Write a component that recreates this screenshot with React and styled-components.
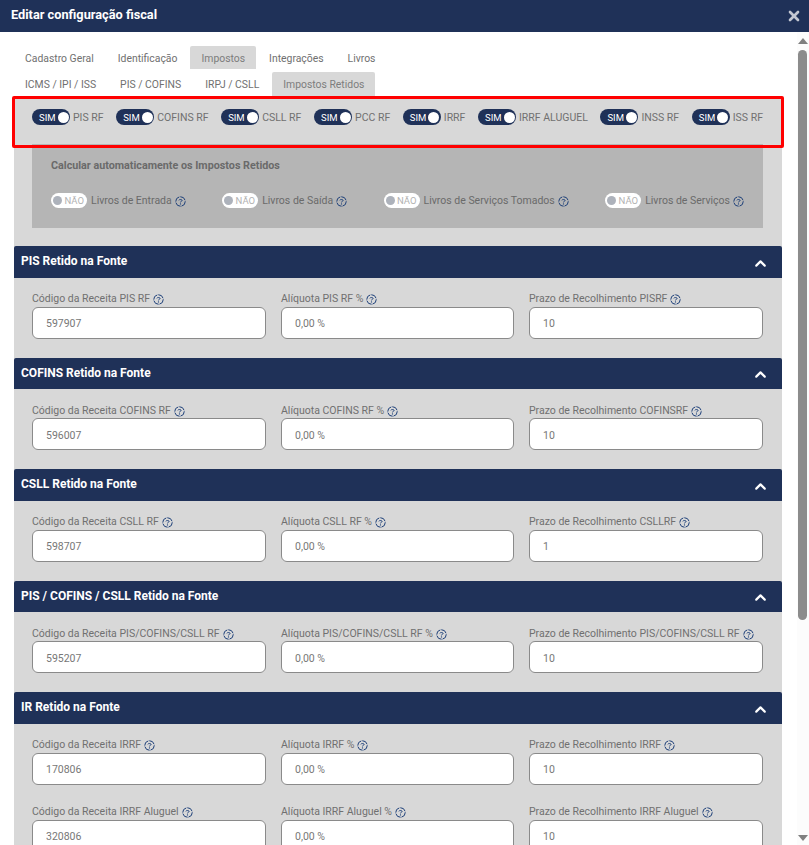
import React from 'react'
import styled, { createGlobalStyle } from 'styled-components'
import { ChevronUp, X } from 'lucide-react'

const GlobalStyle = createGlobalStyle`
  html, body {
    margin: 0;
    height: 100%;
    overflow: hidden;
    background: #fff;
    font-family: Roboto, "Liberation Sans", sans-serif;
    font-size: 10.5px;
    color: #707070;
  }
  * { box-sizing: border-box; }
`

const mainTabs = ['Cadastro Geral', 'Identificação', 'Impostos', 'Integrações', 'Livros']
const subTabs = ['ICMS / IPI / ISS', 'PIS / COFINS', 'IRPJ / CSLL', 'Impostos Retidos']
const retidos = ['PIS RF', 'COFINS RF', 'CSLL RF', 'PCC RF', 'IRRF', 'IRRF ALUGUEL', 'INSS RF', 'ISS RF']
const livros = ['Livros de Entrada', 'Livros de Saída', 'Livros de Serviços Tomados', 'Livros de Serviços']

const sections = [
  {
    title: 'PIS Retido na Fonte',
    fields: [
      ['Código da Receita PIS RF', '597907'],
      ['Alíquota PIS RF %', '0,00 %'],
      ['Prazo de Recolhimento PISRF', '10'],
    ],
  },
  {
    title: 'COFINS Retido na Fonte',
    fields: [
      ['Código da Receita COFINS RF', '596007'],
      ['Alíquota COFINS RF %', '0,00 %'],
      ['Prazo de Recolhimento COFINSRF', '10'],
    ],
  },
  {
    title: 'CSLL Retido na Fonte',
    fields: [
      ['Código da Receita CSLL RF', '598707'],
      ['Alíquota CSLL RF %', '0,00 %'],
      ['Prazo de Recolhimento CSLLRF', '1'],
    ],
  },
  {
    title: 'PIS / COFINS / CSLL Retido na Fonte',
    fields: [
      ['Código da Receita PIS/COFINS/CSLL RF', '595207'],
      ['Alíquota PIS/COFINS/CSLL RF %', '0,00 %'],
      ['Prazo de Recolhimento PIS/COFINS/CSLL RF', '10'],
    ],
  },
  {
    title: 'IR Retido na Fonte',
    fields: [
      ['Código da Receita IRRF', '170806'],
      ['Alíquota IRRF %', '0,00 %'],
      ['Prazo de Recolhimento IRRF', '10'],
      ['Código da Receita IRRF Aluguel', '320806'],
      ['Alíquota IRRF Aluguel %', '0,00 %'],
      ['Prazo de Recolhimento IRRF Aluguel', '10'],
    ],
  },
]

function Help() {
  return (
    <HelpIcon viewBox="0 0 10 10">
      <circle cx="5" cy="5" r="4.3" fill="none" stroke="#1c3f78" strokeWidth="0.9" strokeDasharray="5.6 0.9" />
      <path d="M3.5 3.9C3.6 3 6.4 3 6.5 3.9C6.5 4.8 5 4.7 5 5.8" fill="none" stroke="#1c3f78" strokeWidth="0.9" />
      <circle cx="5" cy="7.2" r="0.55" fill="#1c3f78" />
    </HelpIcon>
  )
}

export default function App() {
  return (
    <Modal>
      <GlobalStyle />
      <Header>
        <Title>Editar configuração fiscal</Title>
        <CloseIcon size={16} strokeWidth={4} />
      </Header>
      <Body>
        <Content>
          <Tabs>
            {mainTabs.map(t => <Tab key={t} active={t === 'Impostos'}>{t}</Tab>)}
          </Tabs>
          <Tabs>
            {subTabs.map(t => <Tab key={t} active={t === 'Impostos Retidos'}>{t}</Tab>)}
          </Tabs>
          <Panel>
            <ToggleRow>
              {retidos.map(r => (
                <ToggleItem key={r}>
                  <SwitchOn><span>SIM</span><Knob /></SwitchOn>
                  {r}
                </ToggleItem>
              ))}
            </ToggleRow>
            <AutoBox>
              <AutoTitle>Calcular automaticamente os Impostos Retidos</AutoTitle>
              <AutoRow>
                {livros.map(l => (
                  <ToggleItem key={l}>
                    <SwitchOff><Knob off /><span>NÃO</span></SwitchOff>
                    <span>{l}</span>
                    <Help />
                  </ToggleItem>
                ))}
              </AutoRow>
            </AutoBox>
            {sections.map(s => (
              <Section key={s.title}>
                <SectionHeader>
                  {s.title}
                  <ChevronUp size={17} strokeWidth={3} />
                </SectionHeader>
                <FieldGrid>
                  {s.fields.map(([label, value]) => (
                    <Field key={label}>
                      <FieldLabel>{label}<Help /></FieldLabel>
                      <Input readOnly value={value} />
                    </Field>
                  ))}
                </FieldGrid>
              </Section>
            ))}
          </Panel>
        </Content>
        <Scrollbar>
          <ArrowUp />
          <Thumb />
          <ArrowDown />
        </Scrollbar>
      </Body>
    </Modal>
  )
}

const Modal = styled.div`
  width: 809px;
  height: 845px;
  display: flex;
  flex-direction: column;
  overflow: hidden;
`

const Header = styled.header`
  height: 32px;
  flex: none;
  background: #1f3158;
  color: #fff;
  display: flex;
  align-items: center;
  justify-content: space-between;
  padding: 0 7px 3px 11px;
`

const Title = styled.h1`
  margin: 0;
  font-size: 12.75px;
  font-weight: 700;
`

const CloseIcon = styled(X)`
  color: #c4c8d2;
  margin-top: 3px;
`

const Body = styled.div`
  flex: 1;
  min-height: 0;
  display: flex;
`

const Content = styled.main`
  flex: 1;
  min-width: 0;
  overflow: hidden;
  padding: 14px 15px 0 14px;
`

const Tabs = styled.nav`
  display: flex;
  gap: 2px;
  height: 24px;
  &:first-child {
    height: 23px;
    margin-bottom: 3px;
  }
`

const Tab = styled.div`
  padding: 1px 11px 0;
  font-size: 10.4px;
  display: flex;
  align-items: center;
  white-space: nowrap;
  border-radius: 2px 2px 0 0;
  color: ${p => (p.active ? '#7d7d7d' : '#707070')};
  background: ${p => (p.active ? '#d8d8d8' : 'transparent')};
`

const Panel = styled.div`
  background: #d8d8d8;
`

const ToggleRow = styled.div`
  position: relative;
  z-index: 1;
  margin: 0 -2px;
  height: 52px;
  border: 3px solid #f00;
  border-radius: 2px;
  padding: 10px 18px 0 17px;
  display: flex;
  justify-content: space-between;
  align-items: flex-start;
`

const ToggleItem = styled.div`
  display: flex;
  align-items: center;
  gap: 3px;
  white-space: nowrap;
  height: 16px;
`

const SwitchOn = styled.div`
  width: 38px;
  height: 16px;
  border-radius: 8px;
  background: #1f3158;
  color: #fff;
  font-size: 9.5px;
  display: flex;
  align-items: center;
  justify-content: space-between;
  padding: 0 1.5px 0 7px;
`

const SwitchOff = styled.div`
  width: 36px;
  height: 15px;
  margin-right: 1px;
  border-radius: 8px;
  background: #fff;
  color: #b3b3b3;
  font-size: 9.5px;
  display: flex;
  align-items: center;
  justify-content: space-between;
  padding: 0 3px 0 2px;
`

const Knob = styled.i`
  border-radius: 50%;
  flex: none;
  background: ${p => (p.off ? '#adb2bb' : '#fff')};
  width: ${p => (p.off ? '9px' : '11px')};
  height: ${p => (p.off ? '9px' : '11px')};
`

const AutoBox = styled.section`
  margin: -4px 19px 0 18px;
  height: 84px;
  background: #b5b5b5;
  padding: 15px 19px 0;
  color: #6a6a6a;
`

const AutoTitle = styled.h2`
  margin: 0;
  font-size: 10.75px;
  line-height: 13px;
  font-weight: 700;
  color: #6a6a6a;
`

const AutoRow = styled.div`
  margin-top: 20px;
  display: flex;
  justify-content: space-between;
`

const HelpIcon = styled.svg`
  width: 11px;
  height: 11px;
  margin-top: 2px;
  flex: none;
`

const Section = styled.section`
  &:nth-of-type(2) { margin-top: 18px; }
`

const SectionHeader = styled.h3`
  margin: 0;
  height: 31.5px;
  background: #1f3158;
  color: #fff;
  font-size: 12px;
  font-weight: 700;
  display: flex;
  align-items: center;
  justify-content: space-between;
  padding: 0 13px 1px 7px;
  border-radius: 2px 2px 0 0;
  svg { margin-top: 4px; }
`

const FieldGrid = styled.div`
  display: grid;
  grid-template-columns: 234px 233px 234px;
  column-gap: 15px;
  row-gap: 20px;
  padding: 14px 19px 19px 18px;
`

const Field = styled.div`
  display: flex;
  flex-direction: column;
`

const FieldLabel = styled.label`
  display: flex;
  align-items: center;
  gap: 3px;
  height: 14px;
  white-space: nowrap;
`

const Input = styled.input`
  margin-top: 1px;
  height: 32px;
  width: 100%;
  border: 1px solid #8a8a8a;
  border-radius: 6px;
  background: #fff;
  padding: 2px 13px 0;
  font: inherit;
  color: #777;
  outline: none;
`

const Scrollbar = styled.aside`
  width: 12px;
  flex: none;
  background: #fcfcfc;
  display: flex;
  flex-direction: column;
  align-items: center;
  padding: 6px 1px 4px 0;
`

const ArrowUp = styled.div`
  border-left: 5px solid transparent;
  border-right: 5px solid transparent;
  border-bottom: 6px solid #808080;
`

const Thumb = styled.div`
  width: 9px;
  height: 570px;
  margin-top: 6px;
  border-radius: 5px;
  background: #8c8c8c;
  margin-bottom: auto;
`

const ArrowDown = styled.div`
  border-left: 5px solid transparent;
  border-right: 5px solid transparent;
  border-top: 6px solid #808080;
`
